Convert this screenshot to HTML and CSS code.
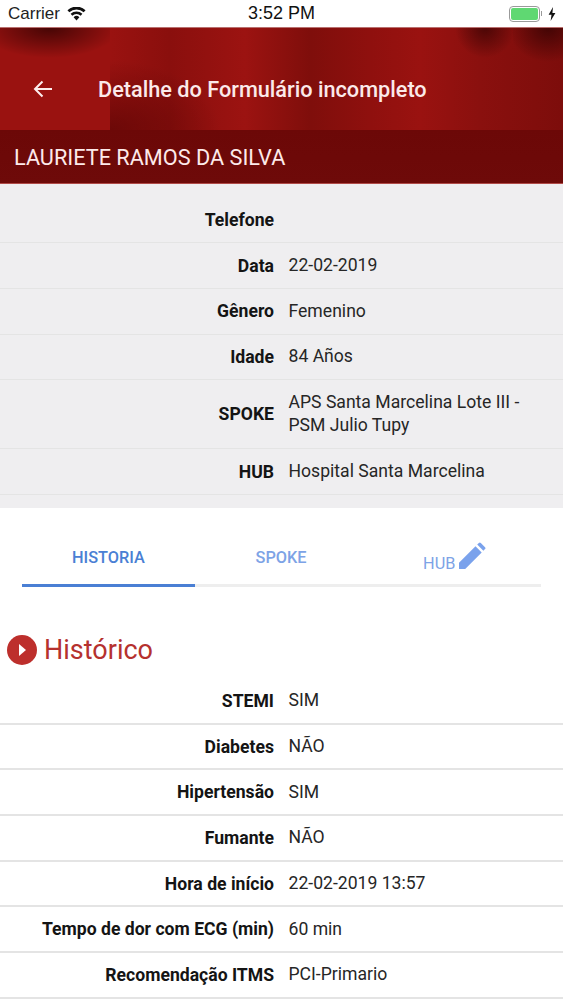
FILE: index.html
```html
<!DOCTYPE html>
<html lang="pt">
<head>
<meta charset="utf-8">
<title>Detalhe do Formulário incompleto</title>
<link rel="stylesheet" href="styles.css">
</head>
<body>
<div class="status">
  <div class="status-left">
    <span class="carrier">Carrier</span>
    <svg class="wifi" viewBox="0 0 20 15" width="19" height="14"><path fill="#111" d="M10 14.5 6.9 10.9a4.6 4.6 0 0 1 6.2 0zM5.5 9.3 3.7 7.2a9.4 9.4 0 0 1 12.6 0l-1.8 2.1a6.7 6.7 0 0 0-9 0zM2.3 5.6.3 3.4a14.3 14.3 0 0 1 19.4 0l-2 2.2a11.4 11.4 0 0 0-15.4 0z"/></svg>
  </div>
  <span class="clock">3:52 PM</span>
  <div class="status-right">
    <span class="battery"><span class="battery-fill"></span></span>
    <span class="battery-tip"></span>
    <svg class="bolt" viewBox="0 0 8 14" width="8" height="14"><path fill="#111" d="M5 0 .6 7.8h2.9L2.6 14 7.4 5.9H4.4z"/></svg>
  </div>
</div>
<header class="appbar">
  <svg class="back" viewBox="0 0 20 18" width="20" height="18"><path fill="none" stroke="#fdeeee" stroke-width="2" d="M19 9H2M9.500 1.500 2 9l7.500 7.500"/></svg>
  <h1 class="title">Detalhe do Formulário incompleto</h1>
</header>
<div class="namebar">LAURIETE RAMOS DA SILVA</div>
<section class="info">
  <div class="row"><span class="label">Telefone</span><span class="value"></span></div>
  <div class="row"><span class="label">Data</span><span class="value">22-02-2019</span></div>
  <div class="row"><span class="label">Gênero</span><span class="value">Femenino</span></div>
  <div class="row"><span class="label">Idade</span><span class="value">84 Años</span></div>
  <div class="row row-tall"><span class="label">SPOKE</span><span class="value">APS Santa Marcelina Lote III - PSM Julio Tupy</span></div>
  <div class="row"><span class="label">HUB</span><span class="value">Hospital Santa Marcelina</span></div>
</section>
<nav class="tabs">
  <div class="tab tab-active">HISTORIA</div>
  <div class="tab">SPOKE</div>
  <div class="tab tab-hub"><span class="hub-text">HUB</span>
    <svg class="pencil" viewBox="0 0 28 28" width="28" height="28"><path fill="#7aa2ec" d="M1 27v-6.200L17.500 4.300l6.200 6.200L7.200 27zM19.200 2.600l1.700-1.600a1.300 1.300 0 0 1 1.900 0l4.200 4.200a1.300 1.300 0 0 1 0 1.900l-1.600 1.700z"/></svg>
  </div>
</nav>
<div class="section-head">
  <svg class="play" viewBox="0 0 30 30" width="30" height="30"><circle cx="15" cy="15" r="15" fill="#bd2f2c"/><path fill="#fff" d="M12 9l7 6-7 6z"/></svg>
  <h2 class="section-title">Histórico</h2>
</div>
<section class="history">
  <div class="row"><span class="label">STEMI</span><span class="value">SIM</span></div>
  <div class="row"><span class="label">Diabetes</span><span class="value">NÃO</span></div>
  <div class="row"><span class="label">Hipertensão</span><span class="value">SIM</span></div>
  <div class="row"><span class="label">Fumante</span><span class="value">NÃO</span></div>
  <div class="row"><span class="label">Hora de início</span><span class="value">22-02-2019 13:57</span></div>
  <div class="row"><span class="label">Tempo de dor com ECG (min)</span><span class="value">60 min</span></div>
  <div class="row"><span class="label">Recomendação ITMS</span><span class="value">PCI-Primario</span></div>
</section>
</body>
</html>
```
FILE: styles.css
```css
* { box-sizing: border-box; }
html, body { margin: 0; padding: 0; }
body { width: 563px; height: 1000px; overflow: hidden; background: #fff; font-family: Roboto, sans-serif; color: #1c1c1c; }

.status { height: 28px; display: flex; align-items: center; justify-content: space-between; padding: 0 7px 0 8px; position: relative; background: #fff; border-bottom: 1px solid #b9706f; }
.status-left { display: flex; align-items: center; gap: 7px; font-family: "Liberation Sans", sans-serif; font-size: 17px; color: #222; }
.clock { position: absolute; left: 0; right: 0; text-align: center; font-family: "Liberation Sans", sans-serif; font-size: 18px; color: #111; pointer-events: none; }
.status-right { display: flex; align-items: center; }
.battery { width: 31px; height: 16px; border: 1px solid #9a9a9a; border-radius: 4px; padding: 1px; display: flex; }
.battery-fill { flex: 1; background: #5fd872; border-radius: 2px; }
.battery-tip { width: 1px; height: 5px; background: #9a9a9a; margin: 0 6px 0 1px; }

.appbar { height: 102px; display: flex; align-items: center; padding: 19px 0 0 33px;
  background-color: #8f100e;
  background-image:
    radial-gradient(ellipse 70px 30px at 45% 0, rgba(35,0,0,.7), rgba(60,0,0,0)),
    radial-gradient(ellipse 30px 30px at 50% 0, rgba(35,0,0,.6), rgba(60,0,0,0)),
    radial-gradient(ellipse 40px 34px at 70% 0, rgba(35,0,0,.65), rgba(60,0,0,0)),
    radial-gradient(ellipse 110px 70px at 0 100%, rgba(70,0,0,.55), rgba(70,0,0,0)),
    linear-gradient(90deg, #9a1210 0, #9a1210 110px, #8a0f0d 170px, #9c1311 245px, #7f0e0b 310px, #8f100e 370px, #9a1210 420px, #8a100e 480px, #7d0d0b 563px);
  background-size: 110px 40px, 60px 40px, 50px 40px, 130px 80px, 100% 100%;
  background-position: 0 0, 455px 0, 513px 0, 110px 22px, 0 0;
  background-repeat: no-repeat; }
.back { flex: none; }
.title { margin: 2px 0 0 45px; font-size: 21.700px; font-weight: 500; color: #fbeaea; white-space: nowrap; }

.namebar { height: 54px; display: flex; align-items: center; padding: 2px 14px 0 14px; background: linear-gradient(180deg, #6c0807, #6e0a09); border-bottom: 1px solid #b04a48; color: #fdeaea; font-size: 21.700px; white-space: nowrap; }

.info { height: 324px; padding: 13.500px 0 14px; background: #efeef0; }
.row { display: flex; align-items: center; min-height: 45.700px; border-bottom: 1px solid #e4e4e4; font-size: 17.600px; }
.row-tall { min-height: 69px; }
.label { width: 275px; flex: none; padding-right: 1px; text-align: right; font-weight: 700; color: #141414; white-space: nowrap; }
.value { flex: 1; padding: 0 30px 0 13.500px; line-height: 23px; color: #262626; }

.tabs { height: 79px; margin: 0 22px; display: flex; align-items: flex-end; border-bottom: 3px solid #eeeeee; }
.tab { flex: 1; height: 54px; margin-bottom: -3px; border-bottom: 3px solid transparent; display: flex; align-items: center; justify-content: center; padding-bottom: 3px; font-size: 16.300px; font-weight: 500; color: #7da3e6; }
.tab-active { color: #4a7fd4; border-bottom-color: #4a7fd4; }
.tab-hub { align-items: flex-end; padding-bottom: 12px; padding-left: 1px; }
.hub-text { line-height: 18px; margin-bottom: -1px; font-weight: 400; }
.pencil { flex: none; margin: 0 0 2px 3px; }

.section-head { height: 46px; margin-top: 46px; display: flex; align-items: flex-start; padding-left: 7px; }
.play { flex: none; margin-top: 2px; }
.section-title { margin: 2px 0 0 7px; font-size: 27px; line-height: 30px; font-weight: 400; color: #b5312e; }

.history .row { border-bottom: 2px solid #e4e4e4; }
```
